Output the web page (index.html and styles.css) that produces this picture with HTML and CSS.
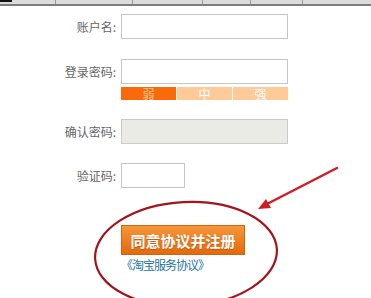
FILE: index.html
```html
<!DOCTYPE html>
<html>
    <head>
        <title>注册</title>
        <link rel="stylesheet" href="styles.css">
    </head>
    <body>
        <div class="topbar">
            <b class="corner"></b>
            <i style="left:55px"></i>
            <i style="left:132px"></i>
            <i style="left:202px"></i>
            <i style="left:250px"></i>
            <i style="left:302px"></i>
        </div>

        <form class="regform">
            <div class="row">
                <label class="label">账户名:</label>
                <input class="field" type="text">
            </div>
            <div class="row row-pwd">
                <label class="label">登录密码:</label>
                <div>
                    <input class="field" type="password">
                    <div class="strength">
                        <span class="on">弱</span>
                        <span>中</span>
                        <span>强</span>
                    </div>
                </div>
            </div>
            <div class="row">
                <label class="label">确认密码:</label>
                <input class="field disabled" type="password" disabled>
            </div>
            <div class="row">
                <label class="label">验证码:</label>
                <input class="field short" type="text">
            </div>
            <div class="submit">
                <button class="btn" type="button">同意协议并注册</button>
                <a class="terms" href="#">《淘宝服务协议》</a>
            </div>
        </form>

        <!-- hand drawn marks on top of the screenshot -->
        <svg class="marks" width="371" height="298" viewBox="0 0 371 298">
            <ellipse cx="186" cy="254" rx="91" ry="52" transform="rotate(-3 186 254)"
                fill="none" stroke="#a3141c" stroke-width="2.2"/>
            <line x1="337" y1="168" x2="267" y2="204" stroke="#d01c24" stroke-width="2.5" stroke-linecap="round"/>
            <polygon points="258,209 271,208 266,199" fill="#d01c24"/>
        </svg>
    </body>
</html>
```

FILE: styles.css
```css
body {
    margin: 0;
    background: #fff;
    font-family: "Noto Sans CJK SC", "Noto Sans", sans-serif;
    font-size: 12px;
    color: #666;
    position: relative;
    height: 298px;
    overflow: hidden;
}
    .topbar {
        position: relative;
        height: 4px;
        background: #dcdcdc;
        border-bottom: 2px solid #7d7d7d;
    }
    .topbar .corner {
        position: absolute;
        left: 0;
        top: 0;
        width: 12px;
        height: 2px;
        background: #111;
    }
    .topbar i {
        position: absolute;
        top: 0;
        width: 1px;
        height: 4px;
        background: #999;
    }
    .regform {
        padding-top: 8px;
    }
    .row {
        display: flex;
        align-items: flex-start;
        margin-bottom: 19px;
    }
    .row:first-child {
        margin-bottom: 20px;
    }
    .label {
        width: 121px;
        padding-right: 5px;
        box-sizing: border-box;
        text-align: right;
        line-height: 25px;
        white-space: nowrap;
    }
    .field {
        display: block;
        margin: 0;
        width: 167px;
        height: 25px;
        box-sizing: border-box;
        border: 1px solid #c6c6c6;
        background: #fff;
        padding: 0 4px;
        font: inherit;
    }
    .field.disabled {
        background: #ebebe6;
        border-color: #cacaca;
    }
    .field.short {
        width: 64px;
    }
    .strength {
        display: flex;
        gap: 1px;
        margin-top: 3px;
        width: 167px;
        height: 13px;
    }
    .strength span {
        flex: 1;
        background: #fdca98;
        color: #fff;
        text-align: center;
        line-height: 13px;
        font-size: 12px;
    }
    .strength span.on {
        background: #f86a0a;
        color: #fcc690;
    }
    .submit {
        padding: 18px 0 0 121px;
    }
    .btn {
        display: block;
        width: 124px;
        height: 30px;
        padding: 0;
        border: 1px solid #d1650f;
        background: linear-gradient(#f5973a, #e5690c);
        color: #fff;
        font-family: "Noto Sans CJK SC", sans-serif;
        font-size: 15px;
        font-weight: bold;
        text-shadow: 0 1px 1px rgba(150,60,0,0.5);
        cursor: pointer;
    }
    .terms {
        display: inline-block;
        margin-top: 1px;
        color: #2475a3;
        text-decoration: none;
        font-size: 12px;
        letter-spacing: -1px;
    }
    .marks {
        position: absolute;
        left: 0;
        top: 0;
        pointer-events: none;
    }
```
